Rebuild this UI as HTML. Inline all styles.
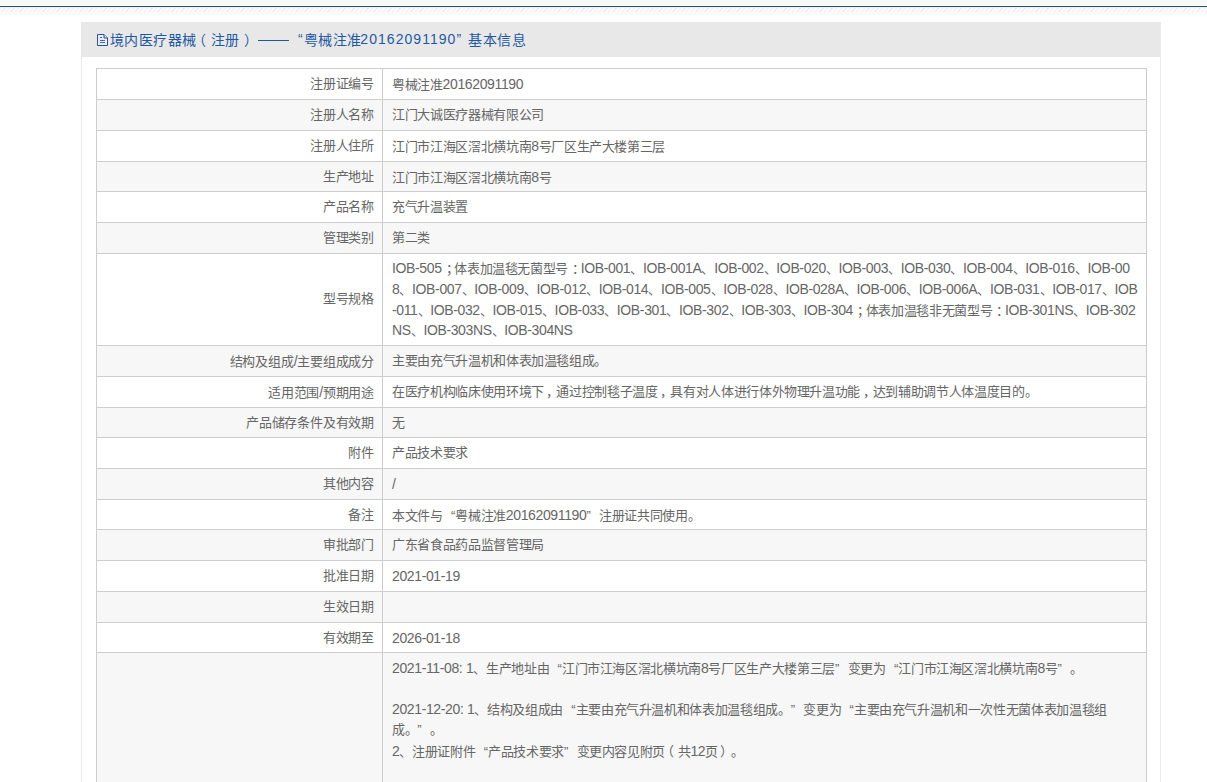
<!DOCTYPE html>
<html lang="zh-CN">
<head>
<meta charset="utf-8">
<style>
html,body{margin:0;padding:0;background:#fff;}
body{width:1207px;height:782px;overflow:hidden;position:relative;font-family:"Liberation Sans",sans-serif;font-size:13px;color:#666;letter-spacing:-0.35px;text-spacing-trim:space-all;}
.topbg{position:absolute;left:0;top:0;width:1207px;height:5px;background:linear-gradient(#f4fbfd 0,#f4fbfd 2px,#fdf7ee 2px,#fdf7ee 5px);}
.topline{position:absolute;left:0;top:6px;width:1207px;height:1px;background:#1f4e7e;}
.topline2{position:absolute;left:0;top:7px;width:1207px;height:1px;background:#e6f5fa;}
.stripes{position:absolute;left:0;top:8px;width:1207px;height:4px;
 background:repeating-linear-gradient(135deg,#ededf2 0,#ededf2 1px,#fbfbfd 1px,#fbfbfd 3.25px);}
.tb3{position:absolute;left:0;top:12px;width:1207px;height:3px;background:linear-gradient(#fdf9f3 0,#fdf9f3 1px,#f8fbfd 1px,#f8fbfd 3px);}
.pl{position:absolute;left:81px;top:57px;width:1px;height:760px;background:#e9e9e9;}
.pr{position:absolute;left:1160px;top:22px;width:1px;height:760px;background:#ececec;}
.phead{position:absolute;left:81px;top:22px;width:1079px;height:35px;background:#e8e8e8;}
.ptitle{position:absolute;left:110px;top:31px;white-space:nowrap;color:#1f58a3;font-size:14px;line-height:18px;}
.ico{position:absolute;left:97px;top:34px;width:11px;height:12px;}
.row{position:absolute;left:96px;width:1051px;box-sizing:border-box;border:1px solid #cdcdcd;}
.g{background:#f7f7f7;}
.vl{position:absolute;left:382px;top:68px;width:1px;height:714px;background:#cdcdcd;}
.tx{position:absolute;white-space:nowrap;line-height:20px;}
.en{letter-spacing:-0.37px;font-size:14px;}
.ql,.qr{display:inline-block;width:12.65px;letter-spacing:0;}
.ql{text-align:right;}
.qr{text-align:left;}
.lb{position:absolute;white-space:nowrap;line-height:20px;text-align:right;right:833px;letter-spacing:-0.2px;}
</style>
</head>
<body>
<div class="topbg"></div>
<div class="topline"></div>
<div class="topline2"></div>
<div class="stripes"></div>
<div class="tb3"></div>
<div class="phead"></div>
<div style="position:absolute;left:258px;top:40px;width:31px;height:1px;background:#1f58a3"></div>
<div class="pl"></div>
<div class="pr"></div>
<svg class="ico" viewBox="0 0 11 12" fill="none" stroke="#34508a" stroke-width="1"><path d="M0.5 0.5H7L10.5 4V11.5H0.5Z" fill="#e4eefa"/><path d="M7 0.5V4H10.5" fill="#c9dbf0"/><path d="M3 3.5H5M3 6.5H8M3 8.5H8" stroke="#4a66a0"/></svg>
<div class="ptitle" id="t0" style="left:110px;letter-spacing:0.4px">境内医疗器械</div>
<div class="ptitle" id="t1" style="left:192px;letter-spacing:0px">（</div>
<div class="ptitle" id="t2" style="left:210.5px;letter-spacing:0.4px">注册</div>
<div class="ptitle" id="t3" style="left:244px;letter-spacing:0px">）</div>
<div class="ptitle" id="t5" style="left:298px;letter-spacing:0px;top:30px">“</div>
<div class="ptitle" id="t6" style="left:304px;letter-spacing:0.4px">粤械注准</div>
<div class="ptitle" id="t7" style="left:360.3px;letter-spacing:1.05px;top:30px">20162091190</div>
<div class="ptitle" id="t8" style="left:456.5px;letter-spacing:0px;top:30px">”</div>
<div class="ptitle" id="t9" style="left:468.3px;letter-spacing:0.5px">基本信息</div>
<div class="row" style="top:68px;height:32px"></div>
<div class="row g" style="top:99px;height:32px"></div>
<div class="row" style="top:130px;height:32px"></div>
<div class="row g" style="top:161px;height:31px"></div>
<div class="row" style="top:191px;height:32px"></div>
<div class="row g" style="top:222px;height:32px"></div>
<div class="row" style="top:253px;height:93px"></div>
<div class="row g" style="top:345px;height:32px"></div>
<div class="row" style="top:376px;height:32px"></div>
<div class="row g" style="top:407px;height:31px"></div>
<div class="row" style="top:437px;height:32px"></div>
<div class="row g" style="top:468px;height:32px"></div>
<div class="row" style="top:499px;height:31px"></div>
<div class="row g" style="top:529px;height:32px"></div>
<div class="row" style="top:560px;height:32px"></div>
<div class="row g" style="top:591px;height:32px"></div>
<div class="row" style="top:622px;height:31px"></div>
<div class="row g" style="top:652px;height:249px"></div>
<div class="vl"></div>
<div class="lb" id="lb0" style="top:74px">注册证编号</div>
<div class="tx" id="v0" style="left:392px;top:74px">粤械注准<span class="en">20162091190</span></div>
<div class="lb" id="lb1" style="top:105px">注册人名称</div>
<div class="tx" id="v1" style="left:392px;top:105px">江门大诚医疗器械有限公司</div>
<div class="lb" id="lb2" style="top:136px">注册人住所</div>
<div class="tx" id="v2" style="left:392px;top:136px">江门市江海区滘北横坑南<span class="en">8</span>号厂区生产大楼第三层</div>
<div class="lb" id="lb3" style="top:167px">生产地址</div>
<div class="tx" id="v3" style="left:392px;top:167px">江门市江海区滘北横坑南<span class="en">8</span>号</div>
<div class="lb" id="lb4" style="top:197px">产品名称</div>
<div class="tx" id="v4" style="left:392px;top:197px">充气升温装置</div>
<div class="lb" id="lb5" style="top:228px">管理类别</div>
<div class="tx" id="v5" style="left:392px;top:228px">第二类</div>
<div class="lb" id="lb6" style="top:289px">型号规格</div>
<div class="tx" id="m0" style="left:392px;top:258.1px"><span class="en">IOB-505</span><span style="position:relative;left:4px">；</span>体表加温毯无菌型号<span style="position:relative;left:4px">：</span><span class="en">IOB-001</span>、<span class="en">IOB-001A</span>、<span class="en">IOB-002</span>、<span class="en">IOB-020</span>、<span class="en">IOB-003</span>、<span class="en">IOB-030</span>、<span class="en">IOB-004</span>、<span class="en">IOB-016</span>、<span class="en">IOB-00</span></div>
<div class="tx" id="m1" style="left:392px;top:278.8px"><span class="en">8</span>、<span class="en">IOB-007</span>、<span class="en">IOB-009</span>、<span class="en">IOB-012</span>、<span class="en">IOB-014</span>、<span class="en">IOB-005</span>、<span class="en">IOB-028</span>、<span class="en">IOB-028A</span>、<span class="en">IOB-006</span>、<span class="en">IOB-006A</span>、<span class="en">IOB-031</span>、<span class="en">IOB-017</span>、<span class="en">IOB</span></div>
<div class="tx" id="m2" style="left:392px;top:299.5px"><span class="en">-011</span>、<span class="en">IOB-032</span>、<span class="en">IOB-015</span>、<span class="en">IOB-033</span>、<span class="en">IOB-301</span>、<span class="en">IOB-302</span>、<span class="en">IOB-303</span>、<span class="en">IOB-304</span><span style="position:relative;left:4px">；</span>体表加温毯非无菌型号<span style="position:relative;left:4px">：</span><span class="en">IOB-301NS</span>、<span class="en">IOB-302</span></div>
<div class="tx" id="m3" style="left:392px;top:320.2px"><span class="en">NS</span>、<span class="en">IOB-303NS</span>、<span class="en">IOB-304NS</span></div>
<div class="lb" id="lb7" style="top:351px">结构及组成<span class="en">/</span>主要组成成分</div>
<div class="tx" id="v7" style="left:392px;top:351px">主要由充气升温机和体表加温毯组成。</div>
<div class="lb" id="lb8" style="top:382px">适用范围<span class="en">/</span>预期用途</div>
<div class="tx" id="v8" style="left:392px;top:382px">在医疗机构临床使用环境下<span style="position:relative;left:2.5px">，</span>通过控制毯子温度<span style="position:relative;left:2.5px">，</span>具有对人体进行体外物理升温功能<span style="position:relative;left:2.5px">，</span>达到辅助调节人体温度目的。</div>
<div class="lb" id="lb9" style="top:413px">产品储存条件及有效期</div>
<div class="tx" id="v9" style="left:392px;top:413px">无</div>
<div class="lb" id="lb10" style="top:443px">附件</div>
<div class="tx" id="v10" style="left:392px;top:443px">产品技术要求</div>
<div class="lb" id="lb11" style="top:474px">其他内容</div>
<div class="tx" id="v11" style="left:392px;top:474px"><span class="en">/</span></div>
<div class="lb" id="lb12" style="top:505px">备注</div>
<div class="tx" id="v12" style="left:392px;top:505px">本文件与<span class="ql">“</span>粤械注准<span class="en">20162091190</span><span class="qr">”</span>注册证共同使用。</div>
<div class="lb" id="lb13" style="top:535px">审批部门</div>
<div class="tx" id="v13" style="left:392px;top:535px">广东省食品药品监督管理局</div>
<div class="lb" id="lb14" style="top:566px">批准日期</div>
<div class="tx" id="v14" style="left:392px;top:566px"><span class="en">2021-01-19</span></div>
<div class="lb" id="lb15" style="top:597px">生效日期</div>
<div class="lb" id="lb16" style="top:628px">有效期至</div>
<div class="tx" id="v16" style="left:392px;top:628px"><span class="en">2026-01-18</span></div>
<div class="tx" id="c0" style="left:392px;top:658.2px"><span class="en">2021-11-08: 1</span>、生产地址由<span class="ql">“</span>江门市江海区滘北横坑南<span class="en">8</span>号厂区生产大楼第三层<span class="qr">”</span>变更为<span class="ql">“</span>江门市江海区滘北横坑南<span class="en">8</span>号<span class="qr">”</span>。</div>
<div class="tx" id="c2" style="left:392px;top:699.4px"><span class="en">2021-12-20: 1</span>、结构及组成由<span class="ql">“</span>主要由充气升温机和体表加温毯组成。<span class="qr">”</span>变更为<span class="ql">“</span>主要由充气升温机和一次性无菌体表加温毯组</div>
<div class="tx" id="c3" style="left:392px;top:720.0px">成。<span class="qr">”</span>。</div>
<div class="tx" id="c4" style="left:392px;top:740.6px"><span class="en">2</span>、注册证附件<span class="ql">“</span>产品技术要求<span class="qr">”</span>变更内容见附页<span style="position:relative;left:-4px">（</span>共<span class="en">12</span>页<span style="position:relative;left:2px">）</span>。</div>
</body>
</html>
